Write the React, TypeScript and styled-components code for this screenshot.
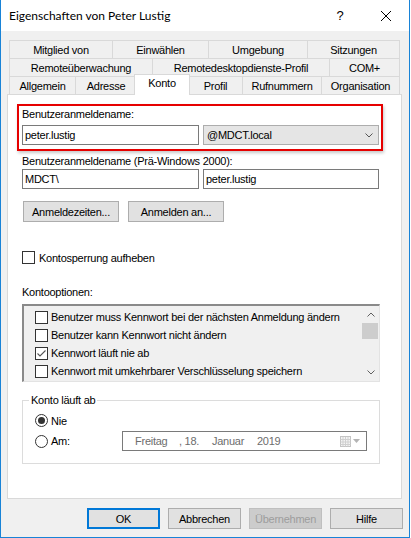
import React from "react";
import styled, { createGlobalStyle } from "styled-components";

const GlobalStyle = createGlobalStyle`
  html, body {
    margin: 0;
    padding: 0;
    background: #ffffff;
  }
  body {
    font-family: "Liberation Sans", Arial, sans-serif;
    font-size: 11px;
    letter-spacing: -0.25px;
    color: #000000;
  }
  * {
    box-sizing: border-box;
  }
`;

const Window = styled.div`
  width: 410px;
  height: 538px;
  display: flex;
  flex-direction: column;
  background: #f0f0f0;
  border: 1px solid #1883d7;
  border-top: none;
`;

const TitleBar = styled.div`
  height: 31px;
  flex: none;
  display: flex;
  align-items: center;
  background: #ffffff;
`;

const Title = styled.div`
  flex: 1;
  padding-left: 8px;
  font-family: Lato, "Liberation Sans", sans-serif;
  font-size: 12px;
  letter-spacing: 0;
`;

const TitleButton = styled.div`
  width: 46px;
  height: 31px;
  display: flex;
  align-items: center;
  justify-content: center;
  font-family: "Liberation Sans", sans-serif;
  font-size: 13px;
  letter-spacing: 0;
`;

const Body = styled.div`
  flex: 1;
  display: flex;
  flex-direction: column;
  padding: 9px 7px 0 6px;
`;

const TabStrip = styled.div`
  display: flex;
  flex-direction: column;
  margin: 0 2px;
`;

const TabRow = styled.div`
  display: flex;
  height: 18px;
  border-right: 1px solid #d9d9d9;
`;

const Tab = styled.div<{ $w: number; $active?: boolean }>`
  flex: none;
  width: ${(p) => (p.$active ? p.$w + 4 : p.$w)}px;
  height: ${(p) => (p.$active ? 21 : 18)}px;
  display: flex;
  align-items: center;
  justify-content: center;
  border: 1px solid #d9d9d9;
  border-bottom: none;
  border-right: ${(p) => (p.$active ? "1px solid #d9d9d9" : "none")};
  background: ${(p) => (p.$active ? "#ffffff" : "#f0f0f0")};
  margin: ${(p) => (p.$active ? "-2px -2px 0 -2px" : "0")};
  padding-bottom: ${(p) => (p.$active ? 4 : 0)}px;
  position: ${(p) => (p.$active ? "relative" : "static")};
  z-index: ${(p) => (p.$active ? 2 : "auto")};
  white-space: nowrap;
`;

const Panel = styled.div`
  height: 405px;
  flex: none;
  display: flex;
  flex-direction: column;
  background: #ffffff;
  border: 1px solid #d9d9d9;
  padding: 9px 21px 0 14px;
`;

const Highlight = styled.div`
  display: flex;
  flex-direction: column;
  gap: 4px;
  margin: 0 -3px 0 -5px;
  padding: 2px 1px 4px 3px;
  border: 2px solid #e60000;
  box-shadow: 1px 2px 3px rgba(0, 0, 0, 0.22);
`;

const Label = styled.div<{ $mt?: number }>`
  line-height: 13px;
  margin-top: ${(p) => p.$mt ?? 0}px;
  white-space: nowrap;
`;

const FieldRow = styled.div<{ $mt?: number }>`
  display: grid;
  grid-template-columns: 177px 176px;
  gap: 4px;
  margin-top: ${(p) => p.$mt ?? 0}px;
`;

const TextBox = styled.input`
  height: 20px;
  width: 100%;
  margin: 0;
  padding: 0 0 0 2px;
  border: 1px solid #7a7a7a;
  background: #ffffff;
  font: inherit;
  letter-spacing: inherit;
  color: #000000;
  outline: none;
`;

const Combo = styled.div`
  height: 20px;
  display: flex;
  align-items: center;
  justify-content: space-between;
  padding: 0 5px 0 3px;
  border: 1px solid #adadad;
  background: #e5e5e5;
`;

const ButtonRow = styled.div<{ $mt?: number; $gap: number }>`
  display: flex;
  gap: ${(p) => p.$gap}px;
  margin-top: ${(p) => p.$mt ?? 0}px;
  padding-left: 1px;
`;

const PushButton = styled.div<{ $w: number; $focus?: boolean; $disabled?: boolean }>`
  width: ${(p) => p.$w}px;
  height: 21px;
  display: flex;
  align-items: center;
  justify-content: center;
  background: ${(p) => (p.$disabled ? "#cccccc" : "#e1e1e1")};
  border: ${(p) => (p.$focus ? "2px solid #0078d7" : p.$disabled ? "1px solid #bfbfbf" : "1px solid #adadad")};
  color: ${(p) => (p.$disabled ? "#9d9d9d" : "#000000")};
`;

const CheckRow = styled.div<{ $mt?: number; $h: number; $gap: number }>`
  display: flex;
  align-items: center;
  gap: ${(p) => p.$gap}px;
  height: ${(p) => p.$h}px;
  margin-top: ${(p) => p.$mt ?? 0}px;
  white-space: nowrap;
`;

const Box = styled.span`
  width: 13px;
  height: 13px;
  flex: none;
  display: flex;
  align-items: center;
  justify-content: center;
  border: 1px solid #333333;
  background: #ffffff;
`;

const ListBox = styled.div`
  height: 78px;
  margin-top: 5px;
  display: flex;
  background: #f0f0f0;
  border-style: solid;
  border-width: 2px 1px 1px 2px;
  border-color: #8a8a8a #e3e3e3 #e3e3e3 #8a8a8a;
`;

const ListItems = styled.div`
  flex: 1;
  padding: 2px 0 0 11px;
`;

const ScrollBar = styled.div`
  width: 17px;
  display: flex;
  flex-direction: column;
  background: #f0f0f0;
`;

const ScrollArrow = styled.div`
  height: 17px;
  display: flex;
  align-items: center;
  justify-content: center;
`;

const ScrollThumb = styled.div`
  height: 16px;
  margin: 0 1px 0 0;
  background: #cdcdcd;
`;

const ScrollTrack = styled.div`
  flex: 1;
`;

const Group = styled.fieldset`
  margin: 12px 0 0 0;
  padding: 7px 12px 12px 6px;
  border: 1px solid #dcdcdc;
  display: flex;
  flex-direction: column;
  gap: 4px;
`;

const Legend = styled.legend`
  padding: 0 2px;
  line-height: 13px;
`;

const RadioRow = styled.div<{ $h: number }>`
  display: flex;
  align-items: center;
  height: ${(p) => p.$h}px;
  padding-left: 6px;
  gap: 3px;
`;

const Radio = styled.span<{ $on?: boolean }>`
  width: 13px;
  height: 13px;
  flex: none;
  border-radius: 50%;
  border: 1px solid #333333;
  background: #ffffff;
  display: flex;
  align-items: center;
  justify-content: center;
  &::after {
    content: "";
    width: 7px;
    height: 7px;
    border-radius: 50%;
    background: #333333;
    display: ${(p) => (p.$on ? "block" : "none")};
  }
`;

const DatePicker = styled.div`
  margin-left: auto;
  width: 245px;
  height: 20px;
  display: flex;
  align-items: center;
  padding-left: 12px;
  padding-right: 6px;
  border: 1px solid #7a7a7a;
  background: #ffffff;
  color: #6d6d6d;
`;

const DateSeg = styled.span<{ $w?: number }>`
  width: ${(p) => (p.$w ? `${p.$w}px` : "auto")};
  flex: none;
`;

const DateIcon = styled.span`
  margin-left: auto;
  display: flex;
  align-items: center;
  gap: 2px;
`;

const Footer = styled.div`
  display: flex;
  justify-content: flex-end;
  gap: 8px;
  margin: 9px -1px 0 0;
`;

const Check = () => (
  <svg width="11" height="11" viewBox="0 0 11 11">
    <path d="M1.5 5.5 L4 8 L9.5 2.5" fill="none" stroke="#555555" strokeWidth="1.1" />
  </svg>
);

const Chevron = ({ up, color = "#333" }: { up?: boolean; color?: string }) => (
  <svg width="8" height="5" viewBox="0 0 8 5">
    <path
      d={up ? "M0.5 4.5 L4 1 L7.5 4.5" : "M0.5 0.5 L4 4 L7.5 0.5"}
      fill="none"
      stroke={color}
      strokeWidth="1"
    />
  </svg>
);

const tabRows: { label: string; w: number; active?: boolean }[][] = [
  [
    { label: "Mitglied von", w: 103 },
    { label: "Einwählen", w: 96 },
    { label: "Umgebung", w: 99 },
    { label: "Sitzungen", w: 92 },
  ],
  [
    { label: "Remoteüberwachung", w: 143 },
    { label: "Remotedesktopdienste-Profil", w: 177 },
    { label: "COM+", w: 70 },
  ],
  [
    { label: "Allgemein", w: 66 },
    { label: "Adresse", w: 61 },
    { label: "Konto", w: 52, active: true },
    { label: "Profil", w: 54 },
    { label: "Rufnummern", w: 79 },
    { label: "Organisation", w: 78 },
  ],
];

const options = [
  { label: "Benutzer muss Kennwort bei der nächsten Anmeldung ändern", on: false },
  { label: "Benutzer kann Kennwort nicht ändern", on: false },
  { label: "Kennwort läuft nie ab", on: true },
  { label: "Kennwort mit umkehrbarer Verschlüsselung speichern", on: false },
];

const App: React.FC = () => {
  return (
    <>
      <GlobalStyle />
      <Window>
        <TitleBar>
          <Title>Eigenschaften von Peter Lustig</Title>
          <TitleButton>?</TitleButton>
          <TitleButton>
            <svg width="10" height="10" viewBox="0 0 10 10">
              <path d="M0 0 L10 10 M10 0 L0 10" stroke="#000" strokeWidth="1" />
            </svg>
          </TitleButton>
        </TitleBar>

        <Body>
          <TabStrip>
            {tabRows.map((row, i) => (
              <TabRow key={i}>
                {row.map((t) => (
                  <Tab key={t.label} $w={t.w} $active={t.active}>
                    {t.label}
                  </Tab>
                ))}
              </TabRow>
            ))}
          </TabStrip>

          <Panel>
            <Highlight>
              <Label>Benutzeranmeldename:</Label>
              <FieldRow>
                <TextBox readOnly defaultValue="peter.lustig" />
                <Combo>
                  <span>@MDCT.local</span>
                  <Chevron color="#555" />
                </Combo>
              </FieldRow>
            </Highlight>

            <Label $mt={4}>Benutzeranmeldename (Prä-Windows 2000):</Label>
            <FieldRow $mt={1}>
              <TextBox readOnly defaultValue="MDCT\" />
              <TextBox readOnly defaultValue="peter.lustig" />
            </FieldRow>

            <ButtonRow $mt={12} $gap={9}>
              <PushButton $w={96}>Anmeldezeiten...</PushButton>
              <PushButton $w={96}>Anmelden an...</PushButton>
            </ButtonRow>

            <CheckRow $mt={29} $h={13} $gap={4}>
              <Box />
              Kontosperrung aufheben
            </CheckRow>

            <Label $mt={22}>Kontooptionen:</Label>
            <ListBox>
              <ListItems>
                {options.map((o) => (
                  <CheckRow key={o.label} $h={18} $gap={3}>
                    <Box>{o.on && <Check />}</Box>
                    {o.label}
                  </CheckRow>
                ))}
              </ListItems>
              <ScrollBar>
                <ScrollArrow>
                  <Chevron up color="#606060" />
                </ScrollArrow>
                <ScrollThumb />
                <ScrollTrack />
                <ScrollArrow>
                  <Chevron color="#606060" />
                </ScrollArrow>
              </ScrollBar>
            </ListBox>

            <Group>
              <Legend>Konto läuft ab</Legend>
              <RadioRow $h={13}>
                <Radio $on />
                Nie
              </RadioRow>
              <RadioRow $h={20}>
                <Radio />
                Am:
                <DatePicker>
                  <DateSeg $w={44}>Freitag</DateSeg>
                  <DateSeg $w={33}>, 18.</DateSeg>
                  <DateSeg $w={45}>Januar</DateSeg>
                  <DateSeg>2019</DateSeg>
                  <DateIcon>
                    <svg width="11" height="11" viewBox="0 0 11 11">
                      <rect x="0.5" y="0.5" width="10" height="10" fill="#f4f4f4" stroke="#c4c4c4" />
                      <path
                        d="M0.5 3.5 H10.5 M0.5 6 H10.5 M0.5 8.5 H10.5 M3 1 V10.5 M5.5 1 V10.5 M8 1 V10.5"
                        stroke="#d0d0d0"
                        strokeWidth="1"
                      />
                    </svg>
                    <svg width="7" height="4" viewBox="0 0 7 4">
                      <path d="M0 0 H7 L3.5 4 Z" fill="#b4b4b4" />
                    </svg>
                  </DateIcon>
                </DatePicker>
              </RadioRow>
            </Group>
          </Panel>

          <Footer>
            <PushButton $w={73} $focus>OK</PushButton>
            <PushButton $w={73}>Abbrechen</PushButton>
            <PushButton $w={73} $disabled>Übernehmen</PushButton>
            <PushButton $w={73}>Hilfe</PushButton>
          </Footer>
        </Body>
      </Window>
    </>
  );
};

export default App;
